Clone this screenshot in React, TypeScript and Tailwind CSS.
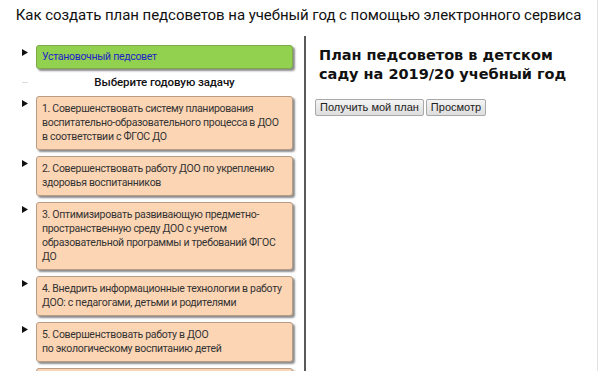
import React from 'react';

interface Task {
  lines: string[];
}

const tasks: Task[] = [
  {
    lines: [
      '1. Совершенствовать систему планирования',
      'воспитательно-образовательного процесса в ДОО',
      'в соответствии с ФГОС ДО',
    ],
  },
  { lines: ['2. Совершенствовать работу ДОО по укреплению', 'здоровья воспитанников'] },
  {
    lines: [
      '3. Оптимизировать развивающую предметно-',
      'пространственную среду ДОО с учетом',
      'образовательной программы и требований ФГОС',
      'ДО',
    ],
  },
  { lines: ['4. Внедрить информационные технологии в работу', 'ДОО: с педагогами, детьми и родителями'] },
  { lines: ['5. Совершенствовать работу в ДОО', 'по экологическому воспитанию детей'] },
  { lines: ['\u00a0'] },
];

const Arrow = () => (
  <svg width="6" height="7" viewBox="0 0 6 7" className="shrink-0">
    <path d="M0 0 L6 3.5 L0 7 Z" fill="#111" />
  </svg>
);

const TaskRow: React.FC<{ task: Task }> = ({ task }) => (
  <li className="flex items-start">
    <div className="w-[36px] pl-[22px] pt-[4px]">
      <Arrow />
    </div>
    <div className="w-[257px] rounded-[3px] border border-[#b89c84] bg-[#fcd5b4] px-[5px] py-[5px] text-[10.5px] leading-[14px] tracking-[-0.3px] text-[#333] shadow-[2px_2px_2px_rgba(0,0,0,0.45)]">
      {task.lines.map((l, i) => (
        <div key={i} className="whitespace-nowrap">
          {l}
        </div>
      ))}
    </div>
  </li>
);

export default function App() {
  return (
    <div
      className="relative h-[371px] w-[598px] overflow-hidden border-r border-[#e3e3e3] bg-white"
      style={{ fontFamily: 'Roboto, "Noto Sans", sans-serif' }}
    >
      <h1 className="h-[36px] whitespace-nowrap pt-[5px] text-center text-[15px] leading-[20px] font-normal tracking-[-0.05px] text-[#111]">
        Как создать план педсоветов на учебный год с помощью электронного сервиса
      </h1>

      <div className="flex h-[335px]">
        {/* left: tasks */}
        <div className="w-[306px] shrink-0 border-r-2 border-[#5a5a5a] pt-[9px]">
          <ul className="flex flex-col">
            <li className="flex items-start">
              <div className="w-[36px] pl-[22px] pt-[4px]">
                <Arrow />
              </div>
              <div className="w-[257px] rounded-[3px] border border-[#7ea84a] bg-[#92d050] px-[5px] py-[4px] text-[10.5px] leading-[14px] tracking-[-0.3px] text-[#2323c8] shadow-[2px_2px_2px_rgba(0,0,0,0.45)]">
                Установочный педсовет
              </div>
            </li>
            <li className="flex h-[27px] items-center">
              <div className="w-[36px] pl-[22px]">
                <div className="h-px w-[6px] bg-[#ddd]" />
              </div>
              <div className="w-[257px] text-center text-[11.5px] font-medium tracking-[-0.1px] text-[#111]">
                Выберите годовую задачу
              </div>
            </li>
            <li>
              <ul className="flex flex-col gap-[6px]">
                {tasks.map((t, i) => (
                  <TaskRow key={i} task={t} />
                ))}
              </ul>
            </li>
          </ul>
        </div>

        {/* right: plan */}
        <div className="flex-1 pl-[13px] pt-[10px]">
          <h2
            className="text-[14.5px] leading-[19px] font-bold text-[#111]"
            style={{ fontFamily: '"DejaVu Sans", sans-serif' }}
          >
            План педсоветов в детском
            <br />
            саду на 2019/20 учебный год
          </h2>
          <div
            className="-ml-[4px] mt-[15px] flex gap-[2px]"
            style={{ fontFamily: '"Liberation Sans", Arial, sans-serif' }}
          >
            <button className="h-[17px] rounded-[2px] border border-[#a9a9a9] bg-gradient-to-b from-[#f4f4f4] to-[#dedede] px-[4px] text-[11px] leading-[15px] text-[#222]">
              Получить мой план
            </button>
            <button className="h-[17px] rounded-[2px] border border-[#a9a9a9] bg-gradient-to-b from-[#f4f4f4] to-[#dedede] px-[4px] text-[11px] leading-[15px] text-[#222]">
              Просмотр
            </button>
          </div>
        </div>
      </div>
    </div>
  );
}
